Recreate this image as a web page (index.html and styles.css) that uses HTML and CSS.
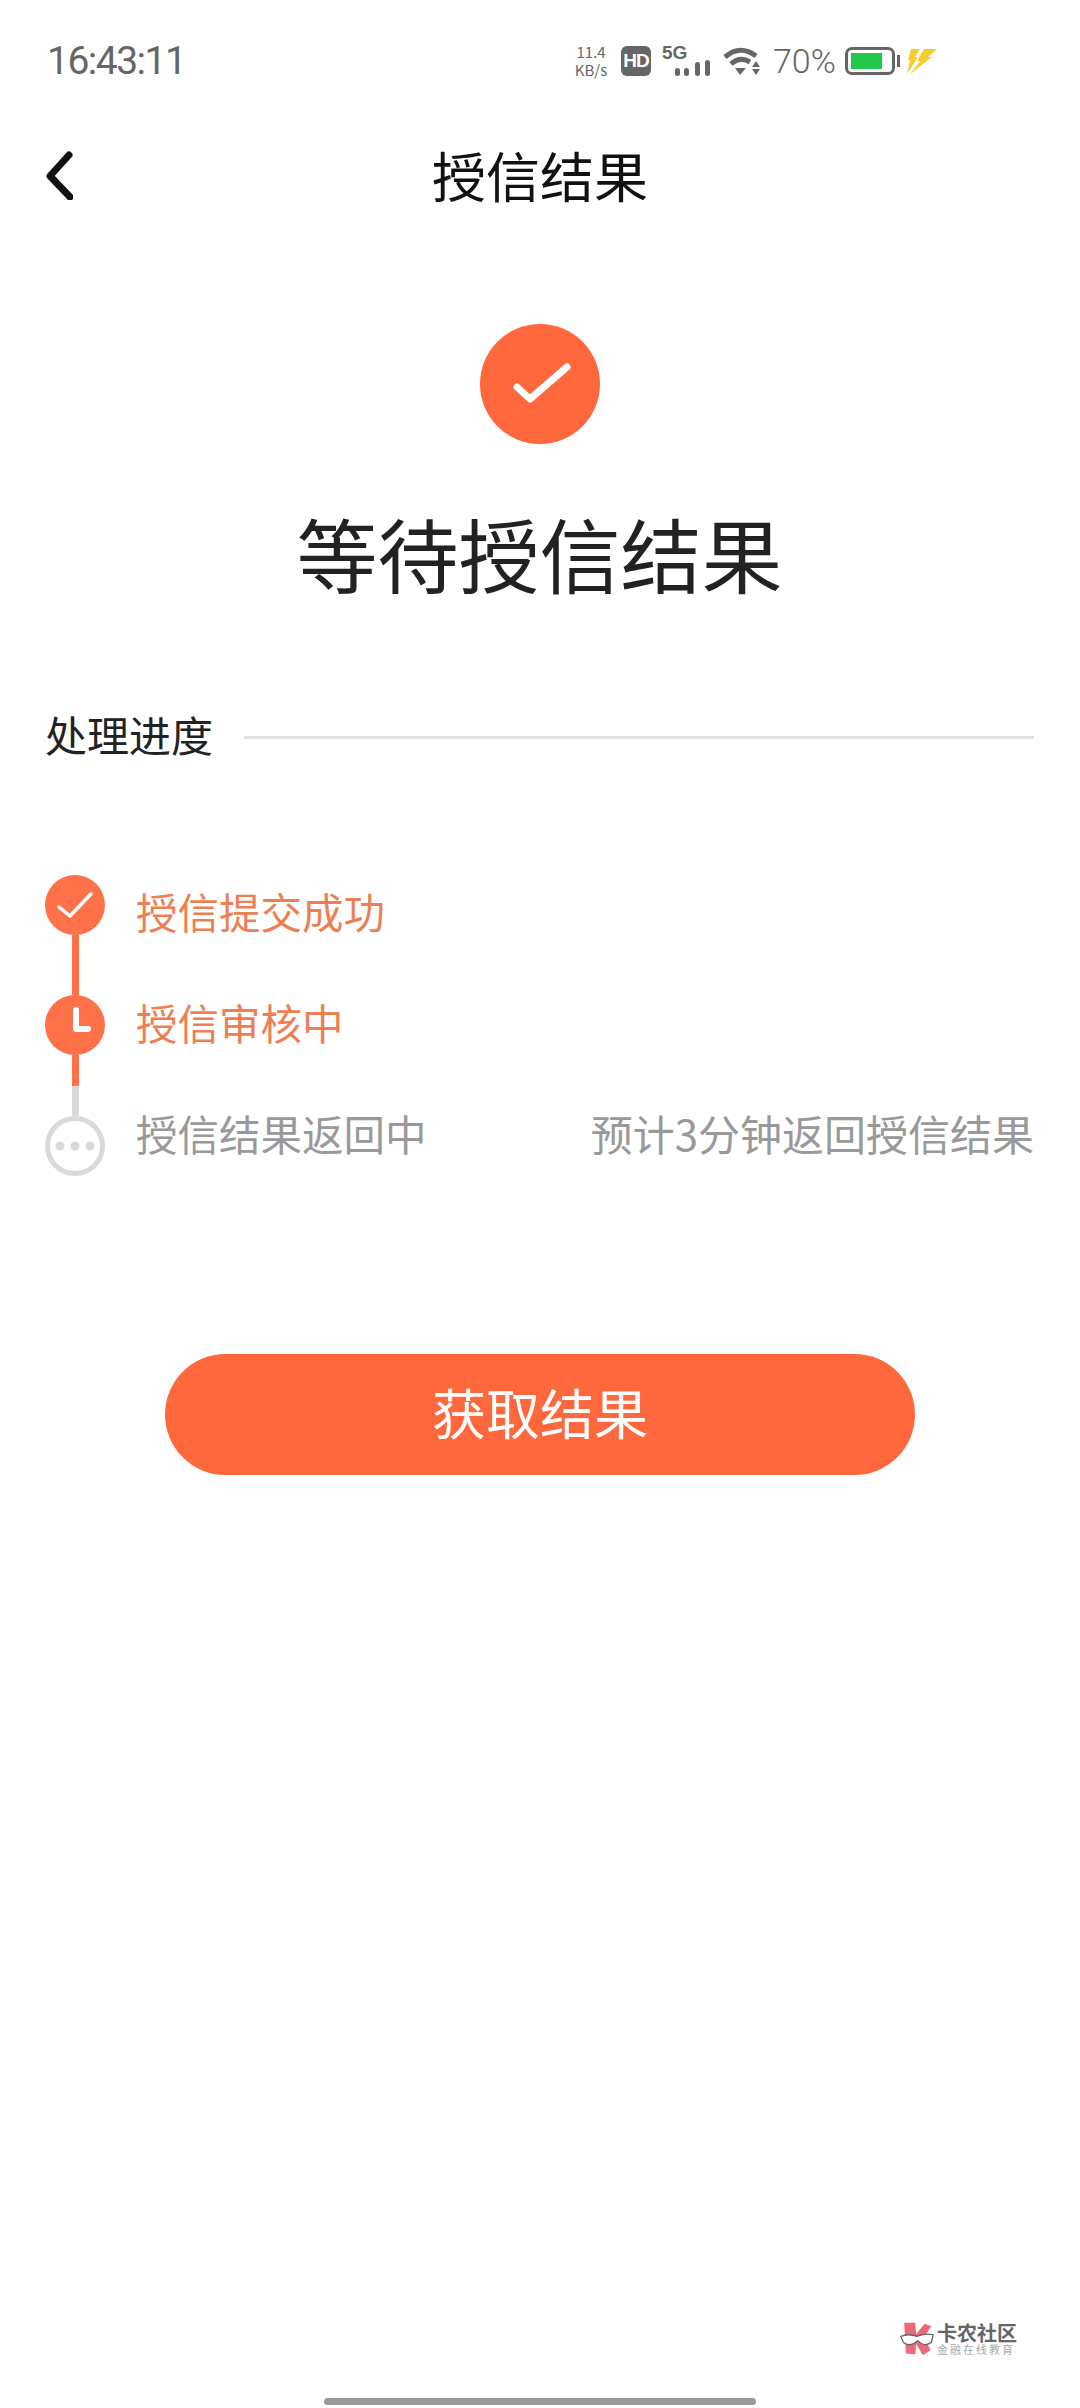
FILE: index.html
```html
<!DOCTYPE html>
<html lang="zh-CN">
<head>
    <meta charset="UTF-8">
    <meta name="viewport" content="width=device-width, initial-scale=1.0">
    <title>授信结果</title>
    <link rel="stylesheet" href="styles.css">
</head>
<body>
    <!-- Status bar -->
    <div class="status-bar">
        <span class="clock">16:43:11</span>
        <div class="status-icons">
            <div class="speed"><span>11.4</span><span>KB/s</span></div>
            <div class="hd-badge">HD</div>
            <div class="signal">
                <span class="signal-label">5G</span>
                <svg class="signal-bars" width="35" height="16" viewBox="0 0 35 16">
                    <rect x="0" y="8" width="5" height="8" rx="2.5" fill="#666"/>
                    <rect x="9" y="8" width="5" height="8" rx="2.5" fill="#666"/>
                    <rect x="20" y="2" width="5" height="14" rx="2.5" fill="#666"/>
                    <rect x="30" y="0" width="5" height="16" rx="2.5" fill="#666"/>
                </svg>
            </div>
            <svg class="wifi" width="38" height="28" viewBox="0 0 38 28">
                <path d="M2 10 Q17 -3 33 9" fill="none" stroke="#666" stroke-width="5"/>
                <path d="M8 17 Q17 9 27 15" fill="none" stroke="#666" stroke-width="5"/>
                <path d="M12 21 L23 21 L17 28 Z" fill="#666"/>
                <path d="M33 14 L37 20 L29 20 Z" fill="#666"/>
                <path d="M29 22 L37 22 L33 28 Z" fill="#666"/>
            </svg>
            <span class="battery-pct">70%</span>
            <div class="battery"><div class="battery-fill"></div></div>
            <svg class="bolt" width="30" height="25" viewBox="0 0 30 25">
                <path d="M4 0 L13 0 L8 8 L11 8 L0 25 L3 11 L1 11 Z" fill="#F3CE2E"/>
                <path d="M17 0 L30 0 L21 8 L25 8 L3 25 L13 12 L10 12 Z" fill="#F3CE2E"/>
            </svg>
        </div>
    </div>

    <!-- Nav -->
    <header class="nav">
        <svg class="back" width="28" height="50" viewBox="0 0 28 50">
            <path d="M24 5 L5 26 L25 47" fill="none" stroke="#111" stroke-width="7" stroke-linecap="round" stroke-linejoin="round"/>
        </svg>
        <h1>授信结果</h1>
    </header>

    <main>
        <section class="result">
            <svg class="result-icon" width="120" height="120" viewBox="0 0 120 120">
                <circle cx="60" cy="60" r="60" fill="#FF683D"/>
                <path d="M37 63 L50 75 L87 43" fill="none" stroke="#fff" stroke-width="7" stroke-linecap="round" stroke-linejoin="round"/>
            </svg>
            <h2>等待授信结果</h2>
        </section>

        <div class="progress-head">
            <span>处理进度</span>
            <div class="progress-line"></div>
        </div>

        <!-- Steps -->
        <div class="steps">
            <div class="rail">
                <svg width="60" height="60" viewBox="0 0 60 60">
                    <circle cx="30" cy="30" r="30" fill="#FF7148"/>
                    <path d="M14 32 L25 41 L46 19" fill="none" stroke="#fff" stroke-width="3.5" stroke-linecap="round" stroke-linejoin="round"/>
                </svg>
                <div class="rail-line"></div>
                <svg width="60" height="60" viewBox="0 0 60 60">
                    <circle cx="30" cy="30" r="30" fill="#FF7148"/>
                    <path d="M31 15 L31 34 L43 34" fill="none" stroke="#fff" stroke-width="6" stroke-linecap="round" stroke-linejoin="round"/>
                </svg>
                <div class="rail-line rail-line-half"></div>
                <svg width="60" height="60" viewBox="0 0 60 60">
                    <circle cx="30" cy="30" r="27.5" fill="#fff" stroke="#DADADA" stroke-width="5"/>
                    <circle cx="15" cy="30" r="4.5" fill="#DADADA"/>
                    <circle cx="30" cy="30" r="4.5" fill="#DADADA"/>
                    <circle cx="45" cy="30" r="4.5" fill="#DADADA"/>
                </svg>
            </div>
            <div class="step-list">
                <div class="step step-done">授信提交成功</div>
                <div class="step step-done">授信审核中</div>
                <div class="step step-todo">
                    <span>授信结果返回中</span>
                    <span class="step-note">预计3分钟返回授信结果</span>
                </div>
            </div>
        </div>

        <button class="result-button">获取结果</button>
    </main>

    <!-- Watermark -->
    <div class="watermark">
        <svg width="34" height="34" viewBox="0 0 40 40">
            <path d="M5 1 L18 1 L19 14 L29 2 L37 5 L28 18 L36 33 L27 39 L19 26 L18 38 L7 37 L6 22 Z" fill="#EE6A78"/>
            <path d="M1 17 Q10 13 20 17 Q30 13 39 15 L37 24 Q28 30 21 22 Q12 30 4 24 Z" fill="#fff" stroke="#666" stroke-width="1.5"/>
        </svg>
        <div class="watermark-text">
            <span class="watermark-name">卡农社区</span>
            <span class="watermark-sub">金融在线教育</span>
        </div>
    </div>

    <div class="home-bar"></div>
</body>
</html>
```

FILE: styles.css
```css
/* General Reset */
* {
    margin: 0;
    padding: 0;
    box-sizing: border-box;
    font-family: "Noto Sans CJK SC", "Noto Sans", sans-serif;
}

body {
    width: 1080px;
    height: 2408px;
    background-color: #FFFFFF;
    display: flex;
    flex-direction: column;
    overflow: hidden;
}

/* Status bar */
.status-bar {
    height: 122px;
    padding-left: 47px;
    display: flex;
    align-items: center;
    color: #666666;
}

.clock {
    font-family: Roboto, sans-serif;
    font-size: 39px;
    letter-spacing: -1.5px;
    width: 526px;
}

.status-icons {
    display: flex;
    align-items: center;
}

.speed {
    width: 36px;
    display: flex;
    flex-direction: column;
    align-items: center;
    font-family: Roboto, sans-serif;
    font-size: 15px;
    line-height: 18px;
}

.hd-badge {
    width: 30px;
    height: 30px;
    margin-left: 12px;
    border-radius: 6px;
    background: #666666;
    color: #FFFFFF;
    font-family: "Liberation Sans", sans-serif;
    font-size: 19px;
    font-weight: 700;
    letter-spacing: -1px;
    line-height: 30px;
    text-align: center;
}

.signal {
    width: 48px;
    height: 30px;
    margin-left: 11px;
    display: flex;
    position: relative;
}

.signal-label {
    font-family: "Liberation Sans", sans-serif;
    font-size: 19px;
    font-weight: 700;
    line-height: 14px;
}

.signal-bars {
    position: absolute;
    right: 0;
    bottom: 0;
}

.wifi {
    margin-left: 13px;
}

.battery-pct {
    font-family: Roboto, sans-serif;
    font-size: 34px;
    font-weight: 300;
    margin-left: 12px;
    width: 72px;
}

.battery {
    width: 50px;
    height: 28px;
    border: 3px solid #666666;
    border-radius: 7px;
    padding: 3px;
    position: relative;
}

.battery::after {
    content: "";
    position: absolute;
    right: -8px;
    top: 5px;
    width: 3px;
    height: 12px;
    background: #666666;
}

.battery-fill {
    width: 31px;
    height: 100%;
    background: #22C84C;
}

.bolt {
    margin-left: 12px;
}

/* Nav */
.nav {
    height: 105px;
    position: relative;
    display: flex;
    align-items: center;
    justify-content: center;
}

.nav h1 {
    font-size: 54px;
    font-weight: 400;
    color: #111111;
}

.back {
    position: absolute;
    left: 45px;
    top: 28px;
}

/* Result block */
main {
    padding: 0 46px 0 45px;
    display: flex;
    flex-direction: column;
}

.result {
    display: flex;
    flex-direction: column;
    align-items: center;
    padding-top: 97px;
}

.result-icon {
    display: block;
    margin-left: 1px;
}

.result h2 {
    font-size: 81px;
    font-weight: 400;
    color: #222222;
    line-height: 118px;
    margin-top: 49px;
}

/* Progress */
.progress-head {
    display: flex;
    align-items: center;
    gap: 31px;
    margin-top: 93px;
    font-size: 42px;
    color: #222222;
    line-height: 60px;
}

.progress-line {
    flex: 1;
    height: 3px;
    margin-top: 7px;
    background: #E3E3E3;
}

.steps {
    display: flex;
    margin-top: 111px;
}

.rail {
    width: 60px;
    display: flex;
    flex-direction: column;
    align-items: center;
}

.rail svg {
    display: block;
}

.rail-line {
    width: 7px;
    height: 60px;
    background: #FF7148;
}

.rail-line-half {
    height: 61px;
    background: linear-gradient(#FF7148 50%, #DADADA 50%);
}

.step-list {
    flex: 1;
    padding: 6px 0 0 31px;
    display: flex;
    flex-direction: column;
    gap: 51px;
}

.step {
    font-size: 41.5px;
    line-height: 60px;
    display: flex;
    justify-content: space-between;
}

.step-note {
    font-size: 42px;
}

.step-done {
    color: #EE7F55;
}

.step-todo {
    color: #999999;
}

.result-button {
    width: 750px;
    height: 121px;
    margin: 178px 0 0 120px;
    padding-bottom: 6px;
    border: none;
    border-radius: 61px;
    background: #FF683D;
    color: #FFFFFF;
    font-size: 54px;
}

/* Watermark */
.watermark {
    margin: auto 0 0 900px;
    display: flex;
    align-items: center;
    gap: 3px;
}

.watermark-text {
    display: flex;
    flex-direction: column;
}

.watermark-name {
    font-size: 20px;
    font-weight: 700;
    line-height: 21px;
    color: #666666;
}

.watermark-sub {
    font-size: 11px;
    line-height: 13px;
    letter-spacing: 2px;
    color: #AAAAAA;
}

.home-bar {
    width: 432px;
    height: 7px;
    margin: 42px 0 3px 324px;
    background: #999999;
    border-radius: 4px;
}
```
